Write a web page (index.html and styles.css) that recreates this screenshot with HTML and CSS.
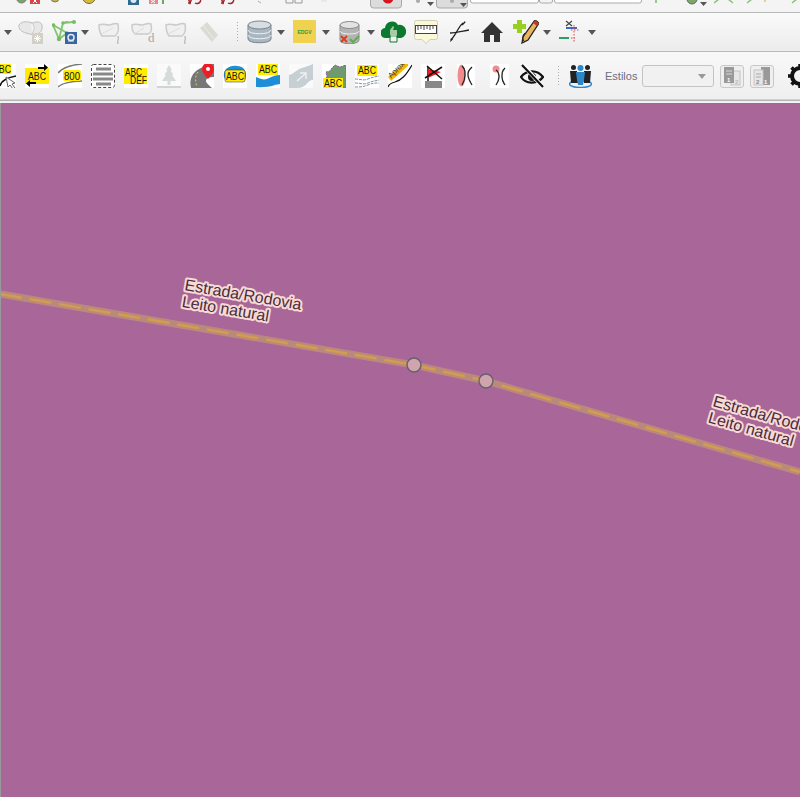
FILE: index.html
```html
<!DOCTYPE html>
<html lang="pt">
<head>
    <meta charset="UTF-8">
    <title>Mapa</title>
    <link rel="stylesheet" href="styles.css">
</head>
<body>
<div class="app">

    <!-- strip of the toolbar that is cut off by the window top -->
    <div class="toolbar strip">
        <svg width="800" height="12" viewBox="0 0 800 12">
            <circle cx="21.5" cy="-2" r="5" fill="#7aa56a" stroke="#777"/>
            <rect x="30" y="-6" width="10" height="10" fill="#d9434a"/>
            <path d="M33 -1l4 4M37 -1l-4 4" stroke="#fff"/>
            <circle cx="55" cy="-2" r="4" fill="#c9b24a" stroke="#777"/>
            <circle cx="89" cy="-3" r="6.5" fill="#d8b93a" stroke="#6b6b4a"/>
            <rect x="128" y="-6" width="11" height="11" fill="#2c6a92"/>
            <circle cx="133.5" cy="0" r="3" fill="#dfe8ee"/>
            <rect x="149" y="-6" width="9" height="10" fill="#e08a90"/>
            <path d="M151 0l4 3M155 0l-4 3" stroke="#fff"/>
            <path d="M163 0v4" stroke="#6fa56a" stroke-width="2"/>
            <path d="M188 -2l2 5 2-5M195 3a3 3 0 0 0 4-6M188 3h3" fill="none" stroke="#a6232c" stroke-width="1.5"/>
            <path d="M221 -2l2 5 2-5M228 3a3 3 0 0 0 4-6M221 3h3" fill="none" stroke="#a6232c" stroke-width="1.5"/>
            <path d="M258 1l3 2" stroke="#aaa"/>
            <path d="M286 -2v5h7v-5M295 -2v5h7v-5" fill="none" stroke="#999"/>
            <path d="M322 -2v3h5" fill="none" stroke="#ddd"/>
            <rect x="370.5" y="-8" width="31" height="16" rx="3" fill="#dcdcdc" stroke="#a8a8a8"/>
            <circle cx="388" cy="-2" r="5.5" fill="#d4141e"/>
            <circle cx="418" cy="1" r="2" fill="#aaa"/>
            <path d="M427 2h7l-3.500 4z" fill="#555"/>
            <rect x="436.500" y="-8" width="31" height="16" rx="3" fill="#dcdcdc" stroke="#a8a8a8"/>
            <circle cx="452" cy="1" r="2" fill="#aaa"/>
            <path d="M460 3h7l-3.500 4z" fill="#555"/>
            <rect x="470.500" y="-8" width="68" height="11" rx="2" fill="#fff" stroke="#aaa"/>
            <rect x="539.500" y="-8" width="13" height="11" rx="2" fill="#f3f3f3" stroke="#aaa"/>
            <rect x="554.500" y="-8" width="87" height="11" rx="2" fill="#fff" stroke="#aaa"/>
            <path d="M656 -1v4" stroke="#7cb86c" stroke-width="1.500"/>
            <circle cx="692" cy="-1" r="5" fill="#7ca76a" stroke="#666"/>
            <path d="M700 2h7l-3.500 4z" fill="#555"/>
            <path d="M714 3l5-4M733 3l-5-4M747 3l5-4" fill="none" stroke="#8cc07c" stroke-width="1.500"/>
            <path d="M765 0v2" stroke="#e5c94a" stroke-width="1.500"/>
            <path d="M792 3l5-4" stroke="#8cc07c" stroke-width="1.500"/>
        </svg>
    </div>

    <!-- middle toolbar -->
    <div class="toolbar row-middle">
        <span class="arrow ml4"></span>

        <svg class="ml6 faded" width="26" height="24" viewBox="0 0 26 24">
            <path d="M1 5c3-5 10-3 14-2 4-2 8-1 9 2 1 5-2 9-6 9-3 1-7 0-10-1-4-1-8-4-7-8z" fill="#e6e6e6" stroke="#b5b5b5"/>
            <path d="M13 3c4 1 4 8 1 10" fill="#f4f4f4" stroke="#c4c4c4"/>
            <rect x="14" y="13" width="11" height="11" fill="#cfcbc0"/>
            <path d="M19.500 15v7M16 18.500h7M17 16l5 5M22 16l-5 5" stroke="#fff"/>
        </svg>

        <svg class="ml8" width="26" height="24" viewBox="0 0 26 24">
            <path d="M1 5l6 14 8-6M1 5l9 5 5 3M7 19L11 3l5-1M11 3l10-1" fill="none" stroke="#82c472" stroke-width="1.800"/>
            <g fill="#74bd64"><circle cx="1.500" cy="5" r="1.800"/><circle cx="7" cy="19" r="2.200"/><circle cx="11" cy="3" r="1.800"/><circle cx="15" cy="13" r="1.800"/><circle cx="22" cy="2" r="2"/></g>
            <rect x="13" y="12" width="12" height="12" fill="#3a66a0"/>
            <circle cx="19" cy="17.500" r="3" fill="none" stroke="#e4ecf4" stroke-width="1.500"/>
            <path d="M16 21h6" stroke="#e4ecf4"/>
        </svg>
        <span class="arrow ml3"></span>

        <svg class="ml9 faded" width="23" height="24" viewBox="0 0 23 24">
            <path d="M1 5c4-2 6 0 10 0s5-3 9-1c1 5 1 9-3 12H4C1 12 1 9 1 5z" fill="#f0f0f0" stroke="#c4c4c4" stroke-width="1.500"/>
            <path d="M3 14l12-6" stroke="#dadada"/>
            <path d="M20 24c-1-3 1-4 0-8" fill="none" stroke="#999"/>
        </svg>
        <svg class="ml10 faded" width="25" height="24" viewBox="0 0 25 24">
            <path d="M1 5c4-2 6 0 10 0s5-3 9-1c1 5 1 9-3 10H4C1 11 1 9 1 5z" fill="#f0f0f0" stroke="#c4c4c4" stroke-width="1.500"/>
            <path d="M3 14l10-6" stroke="#dadada"/>
            <text class="icon-serif" x="17" y="22">d</text>
        </svg>
        <svg class="ml9 faded" width="24" height="24" viewBox="0 0 24 24">
            <path d="M1 5c4-2 6 0 10 0s5-3 9-1c1 5 1 9-3 12H4C1 12 1 9 1 5z" fill="#f0f0f0" stroke="#c4c4c4" stroke-width="1.500"/>
            <path d="M3 14l12-6" stroke="#dadada"/>
            <path d="M20 24c-1-3 1-4 0-8" fill="none" stroke="#999"/>
        </svg>
        <svg class="ml10 faded" width="20" height="24" viewBox="0 0 20 24">
            <path d="M1 8l7-6 11 13-6 7z" fill="#d8d6d0"/>
            <path d="M4 5l11 14" stroke="#f4f4f4" stroke-dasharray="2 1"/>
        </svg>

        <span class="grip ml17"></span>

        <svg class="ml8" width="25" height="24" viewBox="0 0 25 24">
            <path d="M1 5v14c0 5 23 5 23 0V5z" fill="#a9b7c2" stroke="#7c8388"/>
            <ellipse cx="12.500" cy="5" rx="11.500" ry="4" fill="#d8dde2" stroke="#7c8388"/>
            <path d="M1 10c0 5 23 5 23 0M1 15c0 5 23 5 23 0" fill="none" stroke="#eef2f4"/>
        </svg>
        <span class="arrow ml5"></span>

        <svg class="ml8" width="23" height="24" viewBox="0 0 23 24">
            <rect width="23" height="23" fill="#efd24f"/>
            <text class="icon-edgv" x="11.500" y="14" text-anchor="middle">EDGV</text>
        </svg>
        <span class="arrow ml6"></span>

        <svg class="ml9" width="21" height="24" viewBox="0 0 21 24">
            <path d="M1 5v15c0 5 19 5 19 0V5z" fill="#b4b4b4" stroke="#8a8a8a"/>
            <ellipse cx="10.500" cy="5" rx="9.500" ry="3.500" fill="#e3e3e3" stroke="#8a8a8a"/>
            <path d="M1 11c0 4 19 4 19 0" fill="none" stroke="#efefef"/>
            <path d="M2 16l6 6M8 16l-6 6" stroke="#d9401f" stroke-width="2"/>
            <path d="M11 19l3 3 6-6" fill="none" stroke="#5db04a" stroke-width="2"/>
        </svg>
        <span class="arrow ml7"></span>

        <svg class="ml6" width="25" height="24" viewBox="0 0 25 24">
            <path d="M5 18a5 5 0 0 1-1-10 7 7 0 0 1 13-3 6.500 6.500 0 0 1 3 13z" fill="#0a7a2e"/>
            <path d="M9 14v-4l3-4 1 1-1 3h4v5l-1 2h-5z" fill="#a9c9a9"/>
            <path d="M9 17v5h7v-5" fill="#f2f2f2" stroke="#0a7a2e"/>
        </svg>

        <svg class="ml8" width="24" height="24" viewBox="0 0 24 24">
            <path d="M2.500 .5h19a2 2 0 0 1 2 2v15a2 2 0 0 1-2 2H16l-4 4-4-4H2.500a2 2 0 0 1-2-2v-15a2 2 0 0 1 2-2z" fill="#fbf8d8" stroke="#cfcfb8"/>
            <rect x="1.500" y="5.500" width="21" height="8" fill="#fff" stroke="#444"/>
            <path d="M4 6v4M7 6v3M10 6v4M13 6v3M16 6v4M19 6v3" stroke="#444"/>
        </svg>

        <svg class="ml11" width="20" height="24" viewBox="0 0 20 24">
            <path d="M1 13C6 13 14 11 20 10" fill="none" stroke="#222" stroke-width="1.300"/>
            <path d="M14 3C10 6 9 10 7 13 5 16 4 18 2 20" fill="none" stroke="#222" stroke-width="1.300"/>
            <path d="M12.500 4.500L16 1l.5 1.500-3 3zM1 22l1-4 2 1.500z" fill="#222"/>
        </svg>

        <svg class="ml12" width="22" height="24" viewBox="0 0 22 24">
            <path d="M11 2L0 13h3v9h6v-7h4v7h6v-9h3z" fill="#333"/>
        </svg>

        <svg class="ml10" width="26" height="24" viewBox="0 0 26 24">
            <path d="M4 0h5v4h4v5H9v4H4V9H0V4h4z" fill="#97d022"/>
            <path d="M22 0l4 3-11 17-6 3 1-6z" fill="#e9b45c" stroke="#222" stroke-width="1.300"/>
            <path d="M22 0l4 3-2 3-4-3z" fill="#c43a2a"/>
            <path d="M12 13c-3 2-3 7 0 9" fill="none" stroke="#222"/>
        </svg>
        <span class="arrow ml4"></span>

        <svg class="ml8" width="20" height="24" viewBox="0 0 20 24">
            <path d="M7 1l6 5M13 1L7 6" stroke="#444" stroke-width="1.200"/>
            <path d="M7 8h11" stroke="#3b67c8" stroke-width="2"/>
            <path d="M0 18h10" stroke="#2f9a6a" stroke-width="2"/>
            <path d="M15 5v17M12 10h8M12 18h4" stroke="#d8484a" stroke-dasharray="1.500 1.500"/>
        </svg>
        <span class="arrow ml9"></span>
    </div>

    <!-- lower toolbar -->
    <div class="toolbar row-lower">
        <svg class="label-tool first-tool" width="24" height="24" viewBox="0 0 24 24">
            <rect width="24" height="24" fill="#fff"/>
            <rect x="0" y="0" width="19" height="10" fill="#ffeb00"/>
            <text class="icon-abc" x="1" y="8.500" textLength="18" lengthAdjust="spacingAndGlyphs">ABC</text>
            <path d="M8 22c1-5 5-8 16-10" fill="none" stroke="#111" stroke-width="1.500"/>
            <path d="M14 13l9 6-3 1 3 4-2 1-3-4-2 2z" fill="#fff" stroke="#666"/>
        </svg>

        <svg class="label-tool" width="24" height="24" viewBox="0 0 24 24">
            <rect width="24" height="24" fill="#fff"/>
            <rect y="4" width="24" height="16" fill="#ffeb00"/>
            <text class="icon-abc" x="3" y="16" textLength="18" lengthAdjust="spacingAndGlyphs">ABC</text>
            <path d="M13 3h6V0l4 3.500L19 7V5h-6zM11 20H5v3l-4-3.500L5 16v2h6z" fill="#000"/>
        </svg>

        <svg class="label-tool" width="24" height="24" viewBox="0 0 24 24">
            <rect width="24" height="24" fill="#fff"/>
            <path d="M0 9C4 4 12 1 24 0M0 23c3-3 12-6 24-6" fill="none" stroke="#777" stroke-width="1.500"/>
            <rect x="5" y="6" width="18" height="11" rx="2" fill="#ffeb00"/>
            <text class="icon-abc" x="6" y="15.500" textLength="16" lengthAdjust="spacingAndGlyphs">800</text>
        </svg>

        <svg class="label-tool" width="24" height="24" viewBox="0 0 24 24">
            <rect width="24" height="24" fill="#fff"/>
            <rect x=".5" y=".5" width="23" height="23" rx="2" fill="none" stroke="#444" stroke-dasharray="3 2"/>
            <path d="M5 5h15M2 10h20M2 15h20M5 20h15" stroke="#888" stroke-width="3"/>
        </svg>

        <svg class="label-tool" width="24" height="24" viewBox="0 0 24 24">
            <rect width="24" height="24" fill="#fff"/>
            <path d="M0 4h23v16H0z" fill="#ffeb00"/>
            <text class="icon-abc" x="1" y="11.500" textLength="17" lengthAdjust="spacingAndGlyphs">ABC</text>
            <text class="icon-abc" x="6" y="20" textLength="17" lengthAdjust="spacingAndGlyphs">DEF</text>
        </svg>

        <svg class="label-tool faded-more" width="24" height="24" viewBox="0 0 24 24">
            <rect width="24" height="24" fill="#fbfbfb"/>
            <path d="M12 1l3 5h-1.500l3 5H15l4 6H13.500v4h-3v-4H5l4-6H7.500l3-5H9z" fill="#d4dad6"/>
            <path d="M0 23h24" stroke="#ccd4cf" stroke-width="2"/>
        </svg>

        <svg class="label-tool" width="24" height="24" viewBox="0 0 24 24">
            <rect width="24" height="24" fill="#fff"/>
            <path d="M1 24c-2-8 1-15 8-19 5-3 10-5 15-5v13c-4 0-8 1-8 4 0 2 3 4 6 7H1z" fill="#777"/>
            <path d="M8 8c-3 4-3 9-1 15" fill="none" stroke="#ddd24a" stroke-dasharray="2 2"/>
            <path d="M18 15c-4-5-6-7-6-10a6 6 0 0 1 12 0c0 3-2 5-6 10z" fill="#ee1c25"/>
            <circle cx="18" cy="5" r="2" fill="#fff"/>
        </svg>

        <svg class="label-tool" width="24" height="24" viewBox="0 0 24 24">
            <rect width="24" height="24" fill="#fff"/>
            <path d="M1 9c1-5 7-8 13-7 6 0 9 4 9 9 0 6-3 9-5 6-3-3-8 2-11 1-4-1-7-4-6-9z" fill="#1f8ed8"/>
            <rect x="2" y="6" width="20" height="12" rx="2" fill="#ffeb00" stroke="#333" stroke-width=".5"/>
            <text class="icon-abc" x="3" y="15.500" textLength="18" lengthAdjust="spacingAndGlyphs">ABC</text>
        </svg>

        <svg class="label-tool" width="24" height="24" viewBox="0 0 24 24">
            <rect width="24" height="24" fill="#fff"/>
            <path d="M0 13c6 3 10 3 13 1 4-2 7-3 11-3v9c-8 1-10 4-24 3z" fill="#1f8ed8"/>
            <rect x="2" y="0" width="20" height="11" fill="#ffeb00"/>
            <text class="icon-abc" x="3" y="9" textLength="18" lengthAdjust="spacingAndGlyphs">ABC</text>
        </svg>

        <svg class="label-tool" width="24" height="24" viewBox="0 0 24 24">
            <rect width="24" height="24" fill="#fafafa"/>
            <path d="M0 11c5-1 8-6 13-7 4-1 8-3 11-4v16c-6 0-6 8-16 8H0z" fill="#c6cfd4"/>
            <path d="M8 17l8-7M11 9h6v6" fill="none" stroke="#eef1f2" stroke-width="1.500"/>
        </svg>

        <svg class="label-tool" width="24" height="24" viewBox="0 0 24 24">
            <rect width="24" height="24" fill="#fff"/>
            <path d="M24 24V1l-6 2-5-2-3 3-2 3-4 1 1 5-4 3 3 4-1 4z" fill="#6f9a6e" stroke="#8a5c98" stroke-dasharray="2 1"/>
            <rect x="1" y="14" width="20" height="10" fill="#ffeb00"/>
            <text class="icon-abc" x="2" y="22.500" textLength="18" lengthAdjust="spacingAndGlyphs">ABC</text>
        </svg>

        <svg class="label-tool" width="24" height="24" viewBox="0 0 24 24">
            <rect width="24" height="24" fill="#fff"/>
            <rect x="2" y="1" width="20" height="11" fill="#ffeb00"/>
            <text class="icon-abc" x="3" y="10" textLength="18" lengthAdjust="spacingAndGlyphs">ABC</text>
            <path d="M0 15c6 0 8 2 13 0 4-2 7-2 11-3M0 19c6 0 8 2 13 0 4-2 7-2 11-3M0 23c6 0 8 0 13-2 4-2 7-2 11-2" fill="none" stroke="#7d93a0" stroke-dasharray="3 1"/>
        </svg>

        <svg class="label-tool" width="24" height="24" viewBox="0 0 24 24">
            <rect width="24" height="24" fill="#fff"/>
            <path d="M0 13L14 0h6v2L3 17z" fill="#f5b800"/>
            <text class="icon-small" transform="translate(3 14.500) rotate(-45)">Aprox</text>
            <path d="M0 23c1-3 3-4 7-5 7-2 11-7 17-17" fill="none" stroke="#111" stroke-width="1.200"/>
        </svg>

        <svg class="label-tool" width="24" height="24" viewBox="0 0 24 24">
            <rect width="24" height="24" fill="#fff"/>
            <path d="M7 3v14" stroke="#111" stroke-width="1.500"/>
            <path d="M7 5l13 3-13 6z" fill="#ee1c25"/>
            <path d="M4 14L21 3M6 2l15 13" stroke="#111" stroke-width="1.500"/>
            <rect x="4" y="17" width="17" height="7" fill="#888"/>
        </svg>

        <svg class="label-tool small-tool" width="18" height="24" viewBox="0 0 18 24">
            <rect width="18" height="24" fill="#fff"/>
            <ellipse cx="4.500" cy="11.500" rx="4" ry="11" fill="#f28b8b"/>
            <path d="M5 2c3 3 3 5 3 9s-1 7-3 10M15 3c-4 4-4 5-4 8s1 5 4 10" fill="none" stroke="#222" stroke-width="1.300"/>
        </svg>

        <svg class="label-tool small-tool wide-left" width="19" height="24" viewBox="0 0 19 24">
            <rect width="19" height="24" fill="#fff"/>
            <circle cx="6" cy="5" r="3.500" fill="#f28b8b"/>
            <path d="M6 6c3 2 3 4 3 7s-1 5-3 8M15 4c-3 3-3 5-3 9s1 5 3 8" fill="none" stroke="#222" stroke-width="1.300"/>
        </svg>

        <svg class="label-tool eye-tool" width="24" height="24" viewBox="0 0 24 24">
            <path d="M1 13c5-7 16-8 22 0-5 7-17 8-22 0z" fill="none" stroke="#111" stroke-width="2.200"/>
            <circle cx="12" cy="13" r="4" fill="#111"/>
            <path d="M3 1l20 22" stroke="#fff" stroke-width="4"/>
            <path d="M2 1l21 22" stroke="#111" stroke-width="2.200"/>
        </svg>

        <span class="grip ml13"></span>

        <svg class="ml9" width="23" height="24" viewBox="0 0 23 24">
            <ellipse cx="11.500" cy="20" rx="11" ry="3.500" fill="none" stroke="#2f86c8" stroke-width="1.500"/>
            <g fill="#222">
                <circle cx="4.500" cy="3.500" r="2.500"/><path d="M1 7h7l1 12H2z"/>
                <circle cx="18.500" cy="3.500" r="2.500"/><path d="M15 7h7l-1 12h-6z"/>
            </g>
            <circle cx="11.500" cy="4" r="3" fill="#2f86c8"/>
            <path d="M7 8h9l-1 8-1 5H9l-1-5z" fill="#2f86c8"/>
        </svg>

        <span class="styles-label">Estilos</span>
        <span class="combo"><span class="arrow light"></span></span>

        <span class="tool-btn">
            <svg width="18" height="20" viewBox="0 0 18 20">
                <rect x="8" y="5" width="9" height="14" fill="#e6e6e6" stroke="#c4c4c4"/>
                <rect x="1" y="1" width="10" height="16" fill="#999"/>
                <path d="M3 5h6M3 8h6" stroke="#d8d8d8"/>
                <text class="icon-tiny" x="4" y="16" fill="#fff">1</text>
                <text class="icon-tiny" x="12" y="18" fill="#bbb">2</text>
            </svg>
        </span>
        <span class="tool-btn">
            <svg width="18" height="20" viewBox="0 0 18 20">
                <rect x="8" y="1" width="9" height="18" fill="#999"/>
                <rect x="1" y="4" width="9" height="15" fill="#e6e6e6" stroke="#c4c4c4"/>
                <path d="M3 8h5M3 11h5" stroke="#aaa"/>
                <text class="icon-tiny" x="3" y="18" fill="#888">2</text>
                <text class="icon-tiny" x="11" y="18" fill="#fff">1</text>
            </svg>
        </span>

        <svg class="ml14" width="24" height="24" viewBox="0 0 24 24">
            <circle cx="12" cy="12" r="8" fill="none" stroke="#111" stroke-width="4"/>
            <path d="M12 0v24M0 12h24M3.500 3.500l17 17M20.500 3.500l-17 17" stroke="#111" stroke-width="3.500" stroke-dasharray="4 16"/>
        </svg>
    </div>

    <!-- map canvas -->
    <div class="map">
        <svg class="map-canvas" width="799" height="694" viewBox="1 103 799 694">
            <path class="road-casing" d="M0 294L414 365L486 381L800 472"/>
            <path class="road-dash" d="M0 294L414 365L486 381L800 472"/>
            <circle class="vertex" cx="414" cy="365" r="7"/>
            <circle class="vertex" cx="486" cy="381" r="7"/>
            <g class="road-label" transform="translate(184 290) rotate(9.700)">
                <text>Estrada/Rodovia</text>
                <text x="0" y="17">Leito natural</text>
            </g>
            <g class="road-label" transform="translate(712 406) rotate(15.800)">
                <text>Estrada/Rodovia</text>
                <text x="0" y="17">Leito natural</text>
            </g>
        </svg>
    </div>
</div>
</body>
</html>
```

FILE: styles.css
```css
* { margin: 0; padding: 0; box-sizing: border-box; }
html, body { height: 100%; overflow: hidden; }
body { font-family: "Liberation Sans", Arial, sans-serif; background: #f0f0f0; }

.app { height: 797px; display: flex; flex-direction: column; overflow: hidden; }

.toolbar { display: flex; align-items: center; border-bottom: 1px solid #b9b9b9; flex-shrink: 0; }
.toolbar > * { flex-shrink: 0; }
.toolbar svg { display: block; flex-shrink: 0; }
.strip { height: 13px; background: #f4f4f4; align-items: flex-start; }
.row-middle { height: 39px; background: linear-gradient(#fafafa, #ececec); }
.row-lower { height: 51px; padding-bottom: 3px; border-bottom: 0; background: linear-gradient(#f8f8f8 0, #efefef 47px, #b4b4b4 48px, #b4b4b4 49px, #f3f3f3 49px); }

.arrow { display: block; width: 0; height: 0; border-left: 4px solid transparent; border-right: 4px solid transparent; border-top: 5px solid #555; flex-shrink: 0; }
.arrow.light { border-top-color: #999; }
.grip { display: block; width: 3px; height: 22px; flex-shrink: 0; background-image: radial-gradient(circle, #aaa 0.6px, transparent 0.8px); background-size: 3px 3px; }

.faded { opacity: 0.85; }
.faded-more { opacity: 0.9; }

.ml3 { margin-left: 3px; }
.ml4 { margin-left: 4px; }
.ml5 { margin-left: 5px; }
.ml6 { margin-left: 6px; }
.ml7 { margin-left: 7px; }
.ml8 { margin-left: 8px; }
.ml9 { margin-left: 9px; }
.ml10 { margin-left: 10px; }
.ml11 { margin-left: 11px; }
.ml12 { margin-left: 12px; }
.ml13 { margin-left: 13px; }
.ml14 { margin-left: 14px; }
.ml17 { margin-left: 17px; }

.label-tool { margin-left: 9px; }
.first-tool { margin-left: -8px; }
.small-tool { margin-left: 12px; }
.wide-left { margin-left: 15px; }
.eye-tool { margin-left: 11px; }

.styles-label { margin-left: 13px; font-size: 11px; color: #6b6d80; width: 31px; white-space: nowrap; }
.combo { margin-left: 6px; width: 72px; height: 22px; border: 1px solid #c4c4c4; border-radius: 3px; background: #f1f1f1; display: flex; align-items: center; justify-content: flex-end; padding-right: 7px; }
.tool-btn { margin-left: 6px; width: 24px; height: 23px; border: 1px solid #c8c8c8; border-radius: 3px; background: #efefef; display: flex; align-items: center; justify-content: center; }

.icon-abc { font-size: 10px; fill: #111; font-family: "Liberation Sans", Arial, sans-serif; }
.icon-small { font-size: 7.500px; fill: #333; font-family: "Liberation Sans", Arial, sans-serif; }
.icon-tiny { font-size: 6px; font-weight: bold; font-family: "Liberation Sans", Arial, sans-serif; }
.icon-serif { font-size: 13px; fill: #999; font-family: "Liberation Serif", serif; }
.icon-edgv { font-size: 5px; font-weight: bold; fill: #2c9a3c; font-family: "Liberation Sans", Arial, sans-serif; }

.map { flex: 1; background: #a86798; border-left: 1px solid #9a9a9a; }
.map-canvas { display: block; }

.road-casing { fill: none; stroke: #b98a7c; stroke-width: 7; }
.road-dash { fill: none; stroke: #d59c4e; stroke-width: 2.500; stroke-dasharray: 22 8; }
.vertex { fill: #cfa4ac; stroke: #66626e; stroke-width: 1.500; }

.road-label text {
    font-size: 16px;
    fill: #4a2c40;
    stroke: #f8d9d4;
    stroke-width: 4px;
    stroke-linejoin: round;
    paint-order: stroke;
}
```
